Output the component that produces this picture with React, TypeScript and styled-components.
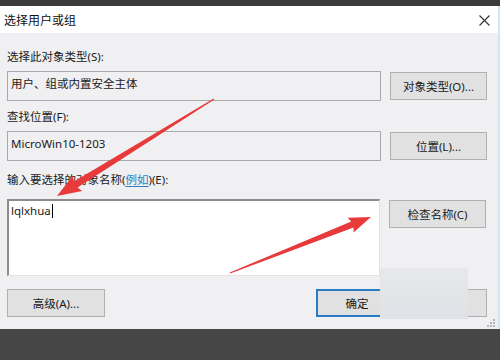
import React from 'react'
import styled, { createGlobalStyle } from 'styled-components'

const Global = createGlobalStyle`
  html, body {
    margin: 0;
    padding: 0;
    width: 500px;
    height: 360px;
    overflow: hidden;
    background: #464646;
  }
  * { box-sizing: border-box; }
`

const font = `"Noto Sans", "Noto Sans CJK SC", sans-serif`

type Pt = [number, number]

// tapered arrow: thin tail, wide head at the tip
const arrowPoints = (tail: Pt, tip: Pt, headLen = 22, headHalf = 9, neckHalf = 3.5, tailHalf = 0.6) => {
  const dx = tip[0] - tail[0]
  const dy = tip[1] - tail[1]
  const len = Math.hypot(dx, dy)
  const ux = dx / len
  const uy = dy / len
  const nx = -uy
  const ny = ux
  const bx = tip[0] - ux * headLen
  const by = tip[1] - uy * headLen
  const pts: Pt[] = [
    [tail[0] + nx * tailHalf, tail[1] + ny * tailHalf],
    [bx + nx * neckHalf, by + ny * neckHalf],
    [bx - ux * 2 + nx * headHalf, by - uy * 2 + ny * headHalf],
    tip,
    [bx - ux * 2 - nx * headHalf, by - uy * 2 - ny * headHalf],
    [bx - nx * neckHalf, by - ny * neckHalf],
    [tail[0] - nx * tailHalf, tail[1] - ny * tailHalf],
  ]
  return pts.map(p => p.map(v => v.toFixed(1)).join(',')).join(' ')
}

const App = () => {
  return (
    <Screen>
      <Global />
      <TopBar />
      <Window>
        <TitleBar>
          <Title>选择用户或组</Title>
          <Close>
            <svg width="11" height="11" viewBox="0 0 11 11">
              <path d="M0.5 0.5 L10.5 10.5 M10.5 0.5 L0.5 10.5" stroke="#333" strokeWidth="1.1" />
            </svg>
          </Close>
        </TitleBar>
        <Body>
          <Label>选择此对象类型(S):</Label>
          <Row>
            <Field>用户、组或内置安全主体</Field>
            <Button>对象类型(O)...</Button>
          </Row>
          <Label top={8}>查找位置(F):</Label>
          <Row>
            <Field>MicroWin10-1203</Field>
            <Button>位置(L)...</Button>
          </Row>
          <Label top={11} bottom={11}>
            输入要选择的对象名称(<Link>例如</Link>)(E):
          </Label>
          <Row align="flex-start">
            <TextArea>
              lqlxhua<Caret />
            </TextArea>
            <Button top={1}>检查名称(C)</Button>
          </Row>
          <Footer>
            <Button>高级(A)...</Button>
            <Actions>
              <Button primary>确定</Button>
              <Button>取消</Button>
            </Actions>
          </Footer>
          <Smudge />
          <Grip>
            <svg width="8" height="8" viewBox="0 0 8 8">
              <rect x="6" y="0" width="2" height="2" fill="#b5b5b5" />
              <rect x="3" y="3" width="2" height="2" fill="#b5b5b5" />
              <rect x="6" y="3" width="2" height="2" fill="#b5b5b5" />
              <rect x="0" y="6" width="2" height="2" fill="#b5b5b5" />
              <rect x="3" y="6" width="2" height="2" fill="#b5b5b5" />
              <rect x="6" y="6" width="2" height="2" fill="#b5b5b5" />
            </svg>
          </Grip>
        </Body>
        <Arrows width="500" height="323" viewBox="0 6 500 323">
          <polygon points={arrowPoints([214, 99], [57, 196])} fill="#e8393b" />
          <polygon points={arrowPoints([230, 273], [371, 217], 20, 8, 3.2, 0.6)} fill="#e8393b" />
        </Arrows>
      </Window>
    </Screen>
  )
}

export default App

const Screen = styled.div`
  width: 500px;
  height: 360px;
  display: flex;
  flex-direction: column;
  background: #464646;
  font-family: ${font};
`
const TopBar = styled.div`
  height: 6px;
  flex-shrink: 0;
  background: #3b3b3b;
`
const Window = styled.div`
  position: relative;
  height: 323px;
  flex-shrink: 0;
  display: flex;
  flex-direction: column;
  border-right: 2px solid #cfe6f6;
`
const TitleBar = styled.div`
  height: 27px;
  flex-shrink: 0;
  background: #fff;
  display: flex;
  align-items: center;
  justify-content: space-between;
  padding: 0 8px 0 4px;
`
const Title = styled.div`
  font-size: 12px;
  color: #111;
`
const Close = styled.div`
  display: flex;
  align-items: center;
  padding-top: 1px;
`
const Body = styled.div`
  position: relative;
  flex: 1;
  background: #f0eff1;
  padding: 16px 11px 0 7px;
  display: flex;
  flex-direction: column;
`
const Label = styled.div<{ top?: number; bottom?: number }>`
  height: 16px;
  line-height: 16px;
  font-size: 11.5px;
  color: #1a1a1a;
  margin-top: ${({ top }) => top ?? 0}px;
  margin-bottom: ${({ bottom }) => bottom ?? 6}px;
`
const Link = styled.span`
  color: #2a7fc8;
  text-decoration: underline;
  text-underline-offset: 2px;
`
const Row = styled.div<{ align?: string }>`
  display: flex;
  align-items: ${({ align }) => align ?? 'center'};
  gap: 9px;
`
const Field = styled.div`
  width: 374px;
  height: 30px;
  border: 1px solid #a9a9ab;
  background: #f0eff1;
  font-size: 11.5px;
  color: #1a1a1a;
  padding: 0 0 6px 3px;
  display: flex;
  align-items: center;
`
const TextArea = styled.div`
  width: 373px;
  height: 77px;
  background: #fff;
  border-top: 2px solid #8c8c8c;
  border-left: 2px solid #8c8c8c;
  border-right: 1px solid #e3e3e3;
  border-bottom: 1px solid #e3e3e3;
  font-size: 11.5px;
  color: #1a1a1a;
  padding: 2px 0 0 2px;
  line-height: 16px;
`
const Caret = styled.span`
  display: inline-block;
  width: 1px;
  height: 14px;
  background: #000;
  vertical-align: -3px;
  margin-left: 1px;
`
const Button = styled.div<{ primary?: boolean; top?: number }>`
  width: ${({ primary }) => (primary ? 82 : 97)}px;
  height: 28px;
  margin-top: ${({ top }) => top ?? 0}px;
  background: #e1e1e2;
  border: ${({ primary }) => (primary ? '2px solid #2a7cc7' : '1px solid #b0b0b0')};
  display: flex;
  align-items: center;
  justify-content: center;
  font-size: 11.5px;
  color: #1a1a1a;
`
const Footer = styled.div`
  margin-top: 13px;
  display: flex;
  justify-content: space-between;
  & > div:first-child {
    width: 98px;
  }
`
const Actions = styled.div`
  display: flex;
  gap: 7px;
  & > div:last-child {
    width: 82px;
  }
`
const Smudge = styled.div`
  position: absolute;
  left: 380px;
  top: 235px;
  width: 88px;
  height: 51px;
  background: linear-gradient(180deg, #e7e8ea 0%, #e2e4e7 60%, #dfe3e7 100%);
`
const Grip = styled.div`
  position: absolute;
  right: 3px;
  bottom: 2px;
  display: flex;
`
const Arrows = styled.svg`
  position: absolute;
  left: 0;
  top: 0;
  pointer-events: none;
`
